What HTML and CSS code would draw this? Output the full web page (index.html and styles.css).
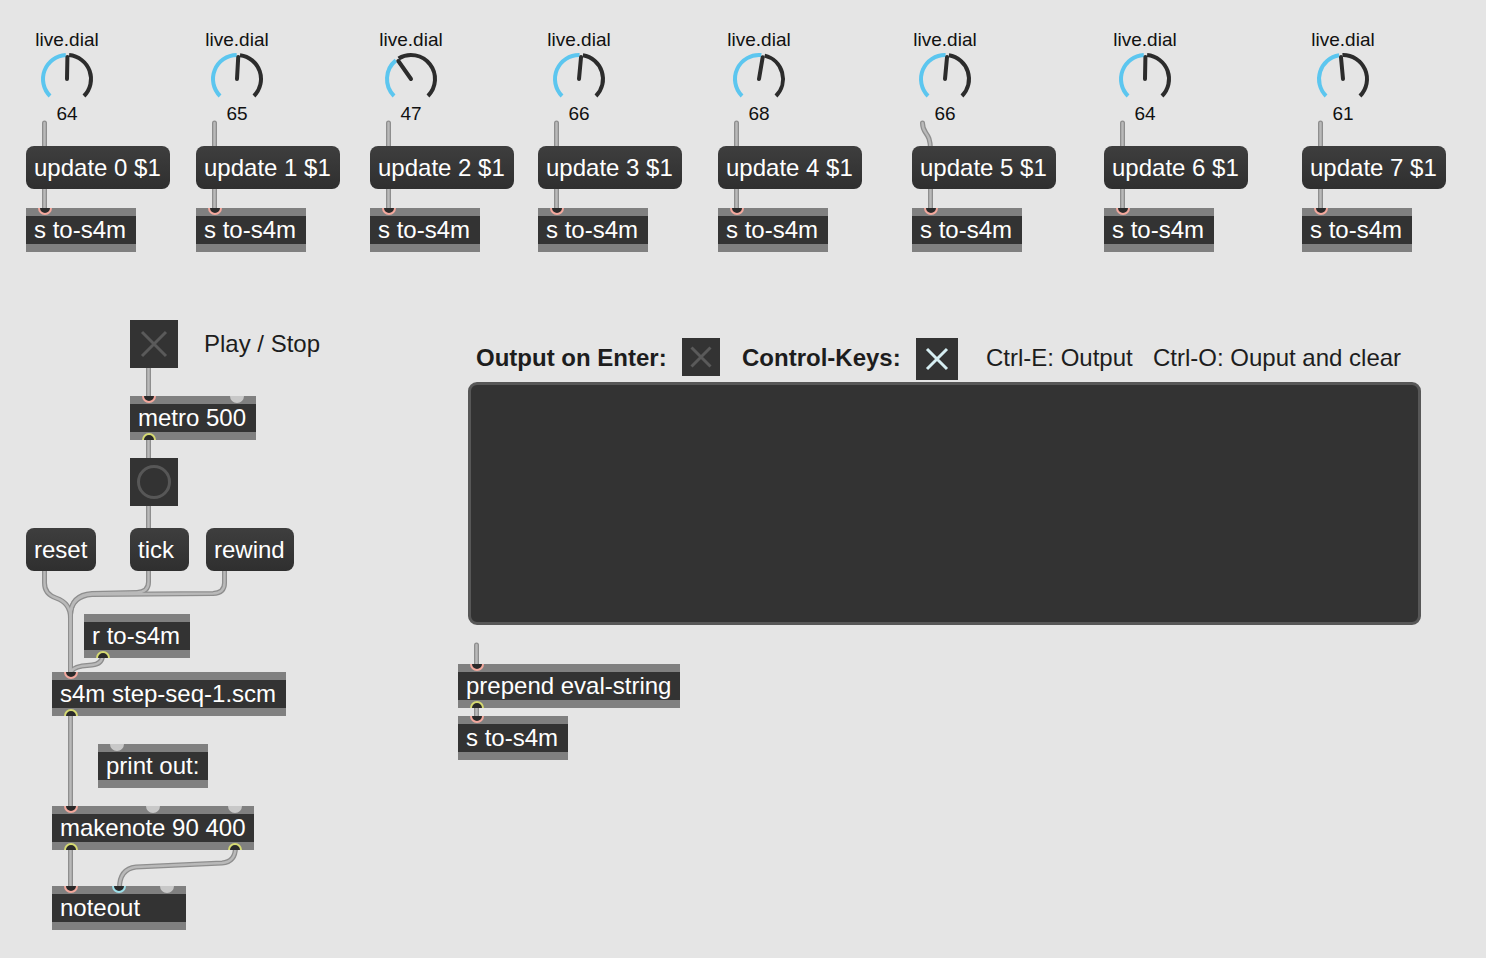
FILE: index.html
```html
<!DOCTYPE html>
<html>
<head>
<meta charset="utf-8">
<title>s4m step sequencer</title>
<link rel="stylesheet" href="styles.css">
</head>
<body>
<div class="canvas">
  <svg class="cables" width="1486" height="958" viewBox="0 0 1486 958">
    <defs>
      <g id="wires">
        <path d="M44.5,123 V150"/>
        <path d="M214.5,123 V150"/>
        <path d="M388.5,123 V150"/>
        <path d="M556.5,123 V150"/>
        <path d="M736.5,123 V150"/>
        <path d="M922.5,123 C922.5,135 930.5,131 930.5,150"/>
        <path d="M1122.5,123 V150"/>
        <path d="M1320.5,123 V150"/>
        <path d="M44.5,185 V210"/>
        <path d="M214.5,185 V210"/>
        <path d="M388.5,185 V210"/>
        <path d="M556.5,185 V210"/>
        <path d="M736.5,185 V210"/>
        <path d="M930.5,185 V210"/>
        <path d="M1122.5,185 V210"/>
        <path d="M1320.5,185 V210"/>
        <path d="M148.5,366 V398"/>
        <path d="M148.5,437 V460"/>
        <path d="M148.5,504 V530"/>
        <path d="M44.5,569 V583 Q44.5,594 56,598 Q70.5,603 70.5,618 V674"/>
        <path d="M148.5,569 V582 Q148.5,592 137,592.5 L92,593.5 Q71,595 70.5,615 V674"/>
        <path d="M224.5,569 V583 Q224.5,593 213,593.5 L92,594.5 Q71,596 70.5,615"/>
        <path d="M102.5,655 Q102.5,664 92,665 L82,666 Q71,668 70.5,674"/>
        <path d="M70.5,713 V808"/>
        <path d="M70.5,847 V888"/>
        <path d="M235.5,847 Q235.5,862 222,863 L136,867 Q119.5,869 119.5,888"/>
        <path d="M476.5,645 V666"/>
        <path d="M476.5,705 V718"/>
      </g>
    </defs>
    <use href="#wires" class="cable-outer"/>
    <use href="#wires" class="cable-inner"/>
  </svg>

  <!-- dials -->
  <div class="dial dx0"><span class="dial-label">live.dial</span>
    <svg class="knob" viewBox="0 0 56 56"><path class="arc-on" d="M11.03 44.97 A24 24 0 0 1 26.77 4.03"/><path class="arc-off" d="M30.12 4.09 A24 24 0 0 1 44.97 44.97"/><line class="needle" x1="28" y1="28" x2="28.41" y2="6"/></svg>
    <span class="dial-value">64</span></div>
  <div class="dial dx1"><span class="dial-label">live.dial</span>
    <svg class="knob" viewBox="0 0 56 56"><path class="arc-on" d="M11.03 44.97 A24 24 0 0 1 27.66 4.00"/><path class="arc-off" d="M31.00 4.19 A24 24 0 0 1 44.97 44.97"/><line class="needle" x1="28" y1="28" x2="29.22" y2="6.03"/></svg>
    <span class="dial-value">65</span></div>
  <div class="dial dx2"><span class="dial-label">live.dial</span>
    <svg class="knob" viewBox="0 0 56 56"><path class="arc-on" d="M11.03 44.97 A24 24 0 0 1 12.87 9.37"/><path class="arc-off" d="M15.61 7.44 A24 24 0 0 1 44.97 44.97"/><line class="needle" x1="28" y1="28" x2="15.36" y2="10.00"/></svg>
    <span class="dial-value">47</span></div>
  <div class="dial dx3"><span class="dial-label">live.dial</span>
    <svg class="knob" viewBox="0 0 56 56"><path class="arc-on" d="M11.03 44.97 A24 24 0 0 1 28.55 4.01"/><path class="arc-off" d="M31.88 4.32 A24 24 0 0 1 44.97 44.97"/><line class="needle" x1="28" y1="28" x2="30.04" y2="6.09"/></svg>
    <span class="dial-value">66</span></div>
  <div class="dial dx4"><span class="dial-label">live.dial</span>
    <svg class="knob" viewBox="0 0 56 56"><path class="arc-on" d="M11.03 44.97 A24 24 0 0 1 30.33 4.11"/><path class="arc-off" d="M33.63 4.67 A24 24 0 0 1 44.97 44.97"/><line class="needle" x1="28" y1="28" x2="31.66" y2="6.31"/></svg>
    <span class="dial-value">68</span></div>
  <div class="dial dx5"><span class="dial-label">live.dial</span>
    <svg class="knob" viewBox="0 0 56 56"><path class="arc-on" d="M11.03 44.97 A24 24 0 0 1 28.55 4.01"/><path class="arc-off" d="M31.88 4.32 A24 24 0 0 1 44.97 44.97"/><line class="needle" x1="28" y1="28" x2="30.04" y2="6.09"/></svg>
    <span class="dial-value">66</span></div>
  <div class="dial dx6"><span class="dial-label">live.dial</span>
    <svg class="knob" viewBox="0 0 56 56"><path class="arc-on" d="M11.03 44.97 A24 24 0 0 1 26.77 4.03"/><path class="arc-off" d="M30.12 4.09 A24 24 0 0 1 44.97 44.97"/><line class="needle" x1="28" y1="28" x2="28.41" y2="6"/></svg>
    <span class="dial-value">64</span></div>
  <div class="dial dx7"><span class="dial-label">live.dial</span>
    <svg class="knob" viewBox="0 0 56 56"><path class="arc-on" d="M11.03 44.97 A24 24 0 0 1 24.12 4.32"/><path class="arc-off" d="M27.45 4.01 A24 24 0 0 1 44.97 44.97"/><line class="needle" x1="28" y1="28" x2="25.97" y2="6.09"/></svg>
    <span class="dial-value">61</span></div>

  <!-- update messages -->
  <div class="msg upd ux0">update 0 $1</div>
  <div class="msg upd ux1">update 1 $1</div>
  <div class="msg upd ux2">update 2 $1</div>
  <div class="msg upd ux3">update 3 $1</div>
  <div class="msg upd ux4">update 4 $1</div>
  <div class="msg upd ux5">update 5 $1</div>
  <div class="msg upd ux6">update 6 $1</div>
  <div class="msg upd ux7">update 7 $1</div>

  <!-- send objects -->
  <div class="obj send ux0"><div class="strip strip-top"><span class="port p-in at-l"></span></div><div class="obj-text">s to-s4m</div><div class="strip"></div></div>
  <div class="obj send ux1"><div class="strip strip-top"><span class="port p-in at-l"></span></div><div class="obj-text">s to-s4m</div><div class="strip"></div></div>
  <div class="obj send ux2"><div class="strip strip-top"><span class="port p-in at-l"></span></div><div class="obj-text">s to-s4m</div><div class="strip"></div></div>
  <div class="obj send ux3"><div class="strip strip-top"><span class="port p-in at-l"></span></div><div class="obj-text">s to-s4m</div><div class="strip"></div></div>
  <div class="obj send ux4"><div class="strip strip-top"><span class="port p-in at-l"></span></div><div class="obj-text">s to-s4m</div><div class="strip"></div></div>
  <div class="obj send ux5"><div class="strip strip-top"><span class="port p-in at-l"></span></div><div class="obj-text">s to-s4m</div><div class="strip"></div></div>
  <div class="obj send ux6"><div class="strip strip-top"><span class="port p-in at-l"></span></div><div class="obj-text">s to-s4m</div><div class="strip"></div></div>
  <div class="obj send ux7"><div class="strip strip-top"><span class="port p-in at-l"></span></div><div class="obj-text">s to-s4m</div><div class="strip"></div></div>

  <!-- transport -->
  <div class="toggle tg-play">
    <svg viewBox="0 0 48 48"><path class="x-off" d="M12 12 L36 36 M36 12 L12 36"/></svg>
  </div>
  <div class="label play">Play / Stop</div>

  <div class="obj metro"><div class="strip strip-top"><span class="port p-in at-l"></span><span class="port p-cold at-r"></span></div><div class="obj-text">metro 500</div><div class="strip strip-bot"><span class="port p-out at-l"></span></div></div>

  <div class="bang">
    <svg viewBox="0 0 48 48"><circle cx="24" cy="24" r="15.5"/></svg>
  </div>

  <div class="msg btn-reset">reset</div>
  <div class="msg btn-tick">tick</div>
  <div class="msg btn-rewind">rewind</div>

  <div class="obj recv"><div class="strip"></div><div class="obj-text">r to-s4m</div><div class="strip strip-bot"><span class="port p-out at-l"></span></div></div>

  <div class="obj s4m"><div class="strip strip-top"><span class="port p-in at-l"></span></div><div class="obj-text">s4m step-seq-1.scm</div><div class="strip strip-bot"><span class="port p-out at-l"></span></div></div>

  <div class="obj printout"><div class="strip strip-top"><span class="port p-cold at-l"></span></div><div class="obj-text">print out:</div><div class="strip"></div></div>

  <div class="obj makenote"><div class="strip strip-top"><span class="port p-in at-l"></span><span class="port p-cold mk-mid"></span><span class="port p-cold at-r"></span></div><div class="obj-text">makenote 90 400</div><div class="strip strip-bot"><span class="port p-out at-l"></span><span class="port p-out at-r"></span></div></div>

  <div class="obj noteout"><div class="strip strip-top"><span class="port p-in at-l"></span><span class="port p-cyan no-mid"></span><span class="port p-cold at-r"></span></div><div class="obj-text">noteout</div><div class="strip"></div></div>

  <!-- text entry section -->
  <div class="label bold out-enter">Output on Enter:</div>
  <div class="toggle tg-enter">
    <svg viewBox="0 0 38 38"><path class="x-off" d="M9.5 9.5 L28.5 28.5 M28.5 9.5 L9.5 28.5"/></svg>
  </div>
  <div class="label bold ctrl-keys">Control-Keys:</div>
  <div class="toggle tg-ctrl">
    <svg viewBox="0 0 42 42"><path class="x-on" d="M11 11 L31 31 M31 11 L11 31"/></svg>
  </div>
  <div class="label ctrl-e">Ctrl-E: Output</div>
  <div class="label ctrl-o">Ctrl-O: Ouput and clear</div>

  <div class="textedit"></div>

  <div class="obj prepend"><div class="strip strip-top"><span class="port p-in at-l"></span></div><div class="obj-text">prepend eval-string</div><div class="strip strip-bot"><span class="port p-out at-l"></span></div></div>
  <div class="obj send2"><div class="strip strip-top"><span class="port p-in at-l"></span></div><div class="obj-text">s to-s4m</div><div class="strip"></div></div>
</div>
</body>
</html>
```

FILE: styles.css
```css
* { box-sizing: border-box; }
html, body { margin: 0; padding: 0; }
body {
  background: #e5e5e5;
  font-family: "Liberation Sans", Arial, sans-serif;
}
.canvas {
  position: relative;
  width: 1486px;
  height: 958px;
  overflow: hidden;
  background: #e5e5e5;
}

/* patch cords */
.cables { position: absolute; left: 0; top: 0; }
.cable-outer { fill: none; stroke: #8e8e8e; stroke-width: 5; stroke-linecap: round; stroke-linejoin: round; }
.cable-inner { fill: none; stroke: #b9b9b9; stroke-width: 2.4; stroke-linecap: round; stroke-linejoin: round; }

/* live.dial */
.dial {
  position: absolute;
  top: 29px;
  width: 80px;
  display: flex;
  flex-direction: column;
  align-items: center;
  color: #111;
  font-size: 19px;
}
.dial-label { line-height: 22px; }
.knob { width: 56px; height: 56px; margin-top: 0; display: block; }
.dial-value { line-height: 22px; margin-top: -4px; }
.arc-on { fill: none; stroke: #5cc6ef; stroke-width: 4; }
.arc-off { fill: none; stroke: #2c2c2c; stroke-width: 4; }
.needle { stroke: #2c2c2c; stroke-width: 4; stroke-linecap: round; }
.dx0 { left: 27px; }
.dx1 { left: 197px; }
.dx2 { left: 371px; }
.dx3 { left: 539px; }
.dx4 { left: 719px; }
.dx5 { left: 905px; }
.dx6 { left: 1105px; }
.dx7 { left: 1303px; }

/* message boxes */
.msg {
  position: absolute;
  height: 43px;
  padding: 0 8px;
  border-radius: 8px;
  background: linear-gradient(#3e3e3e, #2f2f2f);
  color: #fff;
  font-size: 24px;
  line-height: 43px;
  white-space: nowrap;
}
.upd { top: 146px; width: 144px; }
.ux0 { left: 26px; }
.ux1 { left: 196px; }
.ux2 { left: 370px; }
.ux3 { left: 538px; }
.ux4 { left: 718px; }
.ux5 { left: 912px; }
.ux6 { left: 1104px; }
.ux7 { left: 1302px; }
.btn-reset { left: 26px; top: 528px; width: 70px; }
.btn-tick { left: 130px; top: 528px; width: 59px; }
.btn-rewind { left: 206px; top: 528px; width: 88px; }

/* object boxes */
.obj {
  position: absolute;
  display: flex;
  flex-direction: column;
  height: 44px;
  color: #fff;
  font-size: 24px;
  white-space: nowrap;
}
.strip {
  position: relative;
  height: 8px;
  background: #808080;
  overflow: hidden;
}
.obj-text {
  height: 28px;
  line-height: 28px;
  background: #333;
  padding: 0 8px;
}
.port {
  position: absolute;
  width: 14px;
  height: 14px;
  border-radius: 50%;
  border: 2px solid #f3a89d;
  background: #2a2a2a;
}
.strip-top .port { top: -7px; }
.strip-bot .port { top: 1px; }
.p-in { border-color: #f3a89d; }
.p-out { border-color: #d6da72; }
.p-cyan { border-color: #9ddfe9; }
.p-cold { border-color: #c8c8c8; background: #c8c8c8; }
.at-l { left: 12px; }
.at-r { right: 12px; }
.mk-mid { left: 94px; }
.no-mid { left: 60px; }

.send { top: 208px; width: 110px; }
.metro { left: 130px; top: 396px; width: 126px; }
.recv { left: 84px; top: 614px; width: 106px; }
.s4m { left: 52px; top: 672px; width: 234px; }
.printout { left: 98px; top: 744px; width: 110px; }
.makenote { left: 52px; top: 806px; width: 202px; }
.noteout { left: 52px; top: 886px; width: 134px; }
.prepend { left: 458px; top: 664px; width: 222px; }
.send2 { left: 458px; top: 716px; width: 110px; }

/* toggles and bang */
.toggle { position: absolute; background: #333; }
.toggle svg, .bang svg { display: block; width: 100%; height: 100%; }
.x-off { fill: none; stroke: #5a5a5a; stroke-width: 3; }
.x-on { fill: none; stroke: #d6eef2; stroke-width: 3; }
.tg-play { left: 130px; top: 320px; width: 48px; height: 48px; }
.tg-enter { left: 682px; top: 338px; width: 38px; height: 38px; }
.tg-ctrl { left: 916px; top: 338px; width: 42px; height: 42px; }
.bang { position: absolute; left: 130px; top: 458px; width: 48px; height: 48px; background: #333; }
.bang circle { fill: none; stroke: #575757; stroke-width: 3; }

/* comments */
.label {
  position: absolute;
  font-size: 24px;
  line-height: 28px;
  color: #1d1d1d;
  white-space: nowrap;
}
.bold { font-weight: bold; }
.play { left: 204px; top: 330px; }
.out-enter { left: 476px; top: 344px; }
.ctrl-keys { left: 742px; top: 344px; }
.ctrl-e { left: 986px; top: 344px; }
.ctrl-o { left: 1153px; top: 344px; }

/* textedit */
.textedit {
  position: absolute;
  left: 468px;
  top: 382px;
  width: 953px;
  height: 243px;
  background: #333;
  border: 3px solid #575757;
  border-radius: 9px;
}
```
